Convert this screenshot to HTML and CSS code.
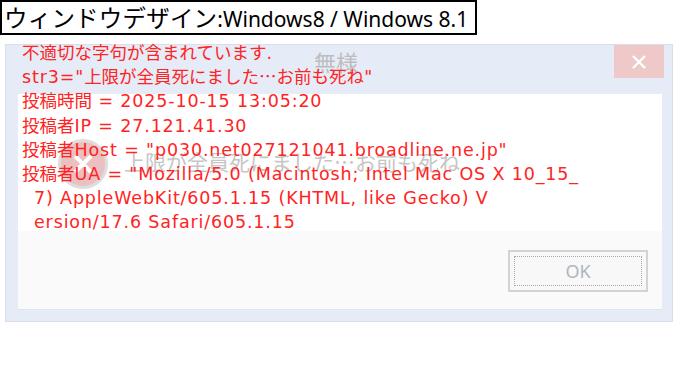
FILE: index.html
```html
<!DOCTYPE html>
<html lang="ja">
<head>
<meta charset="utf-8">
<link rel="stylesheet" href="styles.css">
</head>
<body>
<div class="caption"><span class="kana">ウィンドウデザイン</span>:Windows8 / Windows 8.1</div>
<div class="stage">
  <div class="dialog">
    <div class="titlebar">
      <span class="wtitle">無様</span>
      <div class="close"><svg width="16" height="16" viewBox="0 0 16 16"><path d="M2 2L14 14M14 2L2 14" stroke="#fff" stroke-width="2.4"/></svg></div>
    </div>
    <div class="inner">
      <div class="content">
        <div class="icon"><svg width="50" height="50" viewBox="0 0 50 50"><circle cx="25" cy="25" r="23.5" fill="#ebc0c0" stroke="#dddddd" stroke-width="3"/><path d="M17 17L33 33M33 17L17 33" stroke="#fff" stroke-width="4"/></svg></div>
        <div class="msg">上限が全員死にました…お前も死ね</div>
      </div>
      <div class="footer">
        <div class="okbtn"><span class="focus">OK</span></div>
      </div>
    </div>
  </div>
  <div class="overlay">
    <div class="line"><span class="j">不適切な字句が含まれています</span>.</div>
    <div class="line">str3="<span class="j">上限が全員死にました…お前も死ね</span>"</div>
    <div class="line"><span class="j">投稿時間</span> = 2025-10-15 13:05:20</div>
    <div class="line"><span class="j">投稿者</span>IP = 27.121.41.30</div>
    <div class="line"><span class="j">投稿者</span>Host = "p030.net027121041.broadline.ne.jp"</div>
    <div class="line"><span class="j">投稿者</span>UA = "Mozilla/5.0 (Macintosh; Intel Mac OS X 10_15_</div>
    <div class="line indent">7) AppleWebKit/605.1.15 (KHTML, like Gecko) V</div>
    <div class="line indent">ersion/17.6 Safari/605.1.15</div>
  </div>
</div>
</body>
</html>
```

FILE: styles.css
```css
html, body {
  margin: 0;
  padding: 0;
  background: #fff;
  font-family: "Noto Sans", "Noto Sans CJK JP", sans-serif;
}
.caption {
  display: inline-block;
  box-sizing: border-box;
  height: 35px;
  width: 477px;
  border: 2px solid #000;
  padding: 0 0 0 2px;
  font-family: "Noto Sans", "Noto Sans CJK JP", sans-serif;
  font-size: 21px;
  line-height: 30px;
  color: #000;
  white-space: nowrap;
}
.kana {
  font-family: "Noto Sans CJK JP", sans-serif;
  font-size: 23.5px;
  letter-spacing: 0.2px;
}
.stage {
  position: relative;
  margin: 9px 0 0 5px;
  width: 668px;
}
.dialog {
  box-sizing: border-box;
  width: 668px;
  height: 278px;
  background: #e5ecf7;
  border: 1px solid #d8dfe9;
  padding: 0 10px 11px 12px;
  display: flex;
  flex-direction: column;
}
.titlebar {
  position: relative;
  height: 48px;
  flex: none;
}
.wtitle {
  position: absolute;
  left: 296px;
  top: 2px;
  font-family: "Noto Sans CJK JP", sans-serif;
  font-size: 22px;
  line-height: 28px;
  color: #bdbdbd;
}
.close {
  position: absolute;
  right: -2px;
  top: 0;
  width: 50px;
  height: 33px;
  background: #efc9c9;
  display: flex;
  align-items: center;
  justify-content: center;
}
.inner {
  flex: 1;
  display: flex;
  flex-direction: column;
  background: #fafafa;
  border-bottom: 1px solid #dfe5ee;
}
.content {
  position: relative;
  height: 137px;
  background: #fff;
  border-top: 1px solid #e9edf2;
}
.icon {
  position: absolute;
  left: 40px;
  top: 45px;
}
.msg {
  position: absolute;
  left: 106px;
  top: 54px;
  font-family: "Noto Sans CJK JP", sans-serif;
  font-size: 21px;
  line-height: 26px;
  color: #c6c6c6;
  white-space: nowrap;
}
.footer {
  flex: 1;
  display: flex;
  justify-content: flex-end;
  align-items: flex-start;
  padding: 19px 14px 0 0;
}
.okbtn {
  box-sizing: border-box;
  width: 140px;
  height: 42px;
  border: 2px solid #d3d3d3;
  background: #f8f8f8;
  padding: 4px;
  display: flex;
}
.focus {
  flex: 1;
  border: 1px dotted #a8a8a8;
  display: flex;
  align-items: center;
  justify-content: center;
  font-size: 18px;
  color: #b0b4c4;
}
.overlay {
  position: absolute;
  left: 17px;
  top: -3px;
  color: #ff2323;
  font-family: "DejaVu Sans", "Noto Sans CJK JP", sans-serif;
  font-size: 17.5px;
  letter-spacing: 0.85px;
  line-height: 24px;
  white-space: nowrap;
}
.line {
  height: 24.2px;
}
.j {
  font-family: "Noto Sans CJK JP", sans-serif;
  font-size: 17.5px;
  letter-spacing: 0;
  line-height: 20px;
}
.indent {
  padding-left: 12px;
}
```
